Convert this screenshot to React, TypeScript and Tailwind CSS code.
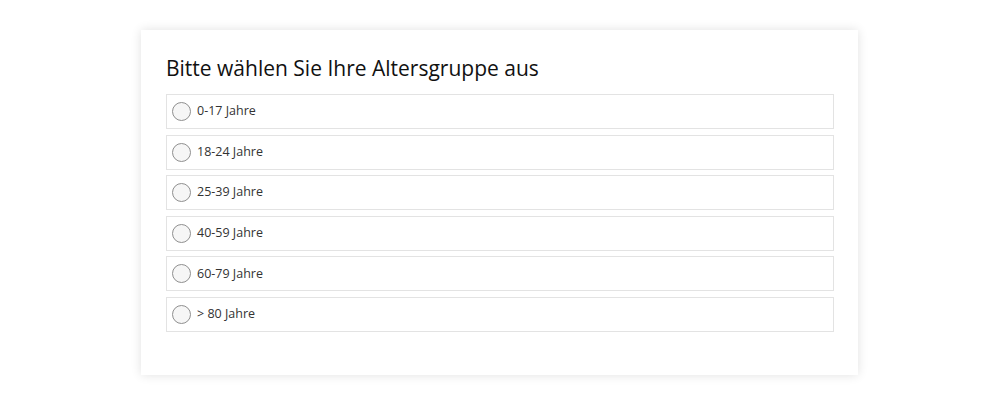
import { useState } from 'react'

const options = ['0-17 Jahre', '18-24 Jahre', '25-39 Jahre', '40-59 Jahre', '60-79 Jahre', '> 80 Jahre']

export default function App() {
  const [selected, setSelected] = useState<number | null>(null)

  return (
    <div className="w-full h-[404px] bg-white pt-[30px] font-['Open_Sans',sans-serif]">
      <div className="ml-[141px] w-[717px] h-[345px] bg-white shadow-[0_0_10px_rgba(0,0,0,0.12)] pl-[25px] pr-[24px] pt-[23px]">
        <h1 className="text-[21px] leading-[30px] text-[#111] mb-[11px]">Bitte wählen Sie Ihre Altersgruppe aus</h1>
        <div className="flex flex-col gap-[5.6px]">
          {options.map((opt, i) => (
            <label
              key={opt}
              className="flex items-center h-[35px] border border-[#e3e3e3] pl-[5px] cursor-pointer"
              onClick={() => setSelected(i)}
            >
              <span className="w-[19px] h-[19px] rounded-full border border-[#8f8f8f] bg-[#f6f6f6] flex items-center justify-center">
                {selected === i && <span className="w-[9px] h-[9px] rounded-full bg-[#555]" />}
              </span>
              <span className="ml-[6px] text-[12.5px] text-[#333]">{opt}</span>
            </label>
          ))}
        </div>
      </div>
    </div>
  )
}
